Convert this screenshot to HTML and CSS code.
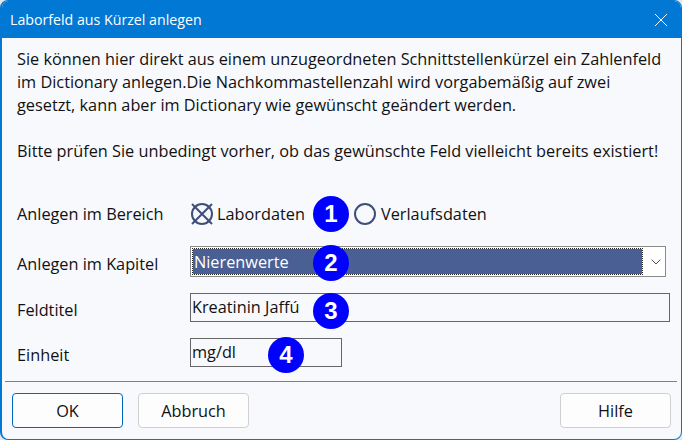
FILE: index.html
```html
<!DOCTYPE html>
<html lang="de">
<head>
    <meta charset="UTF-8">
    <title>Laborfeld aus Kürzel anlegen</title>
    <link rel="stylesheet" href="styles.css">
</head>
<body>

<div class="dialog">
    <div class="titlebar">
        <span class="title">Laborfeld aus Kürzel anlegen</span>
        <svg class="close" width="14" height="14" viewBox="0 0 14 14"><path d="M1 1L13 13M13 1L1 13" stroke="#fff" stroke-width="1" fill="none"/></svg>
    </div>

    <div class="content">
        <p class="intro">Sie können hier direkt aus einem unzugeordneten Schnittstellenkürzel ein Zahlenfeld<br>im Dictionary anlegen.Die Nachkommastellenzahl wird vorgabemäßig auf zwei<br>gesetzt, kann aber im Dictionary wie gewünscht geändert werden.</p>
        <p class="intro">Bitte prüfen Sie unbedingt vorher, ob das gewünschte Feld vielleicht bereits existiert!</p>

        <div class="form">
            <div class="row row-radio">
                <label class="label">Anlegen im Bereich</label>
                <div class="radios">
                    <svg class="radio" width="24" height="24" viewBox="0 0 24 24"><circle cx="12" cy="12" r="10" fill="none" stroke="#3f4f78" stroke-width="2"/><path d="M2 2L22 22M22 2L2 22" stroke="#3f4f78" stroke-width="2"/></svg>
                    <span class="radio-text first">Labordaten</span>
                    <svg class="radio" width="24" height="24" viewBox="0 0 24 24"><circle cx="12" cy="12" r="10" fill="none" stroke="#3f4f78" stroke-width="2"/></svg>
                    <span class="radio-text">Verlaufsdaten</span>
                </div>
                <span class="badge b1">1</span>
            </div>
            <div class="row row-select">
                <label class="label">Anlegen im Kapitel</label>
                <div class="select">
                    <span class="selected">Nierenwerte</span>
                    <svg class="chevron" width="10" height="6" viewBox="0 0 10 6"><path d="M0.5 0.5L5 5L9.5 0.5" stroke="#555" stroke-width="1" fill="none"/></svg>
                </div>
                <span class="badge b2">2</span>
            </div>
            <div class="row row-title">
                <label class="label">Feldtitel</label>
                <div class="input input-wide">Kreatinin Jaffú</div>
                <span class="badge b3">3</span>
            </div>
            <div class="row row-unit">
                <label class="label">Einheit</label>
                <div class="input input-small">mg/dl</div>
                <span class="badge b4">4</span>
            </div>
        </div>
    </div>

    <div class="footer">
        <button class="btn btn-default">OK</button>
        <button class="btn">Abbruch</button>
        <button class="btn btn-help">Hilfe</button>
    </div>
</div>

</body>
</html>
```

FILE: styles.css
```css
* {
    box-sizing: border-box;
}

html, body {
    margin: 0;
    height: 100%;
    background: #e4e6ea;
}

body {
    font-family: "Open Sans", "Noto Sans", sans-serif;
    font-size: 16.3px;
    color: #111;
    overflow: hidden;
}

.dialog {
    width: 682px;
    height: 440px;
    background: #f7f9fd;
    border: 1px solid #0078d4;
    border-left-width: 2px;
    border-radius: 8px;
    overflow: hidden;
    display: flex;
    flex-direction: column;
}

.titlebar {
    height: 37px;
    flex: none;
    background: #0078d4;
    color: #fff;
    font-size: 14.2px;
    padding: 0 13px 0 8px;
    display: flex;
    align-items: center;
    justify-content: space-between;
}

.content {
    flex: 1;
    padding: 10px 10px 0 15px;
}

.intro {
    margin: 0 0 23px;
    line-height: 23px;
    white-space: nowrap;
}

.row {
    position: relative;
    display: flex;
    align-items: center;
}

.row-radio {
    height: 30px;
    margin-top: 36px;
}

.row-select {
    height: 31px;
    margin-top: 17px;
}

.row-title {
    height: 29px;
    margin-top: 16px;
}

.row-unit {
    height: 29px;
    margin-top: 16px;
}

.label {
    width: 173px;
    flex: none;
}

.row-select .label,
.row-title .label,
.row-unit .label {
    padding-top: 4px;
}

.radios {
    display: flex;
    align-items: center;
}

.radio {
    flex: none;
}

.radio-text {
    margin-left: 4px;
}

.radio-text.first {
    margin-left: 3px;
    width: 136px;
    flex: none;
}

.select {
    width: 476px;
    height: 31px;
    border: 1px solid #8a8a8a;
    background: #fff;
    padding: 2px;
    display: flex;
    align-items: center;
}

.selected {
    width: 449px;
    height: 25px;
    background: #4a5f94;
    color: #fff;
    outline: 1px dotted #222;
    padding-left: 1px;
    line-height: 26px;
}

.chevron {
    margin-left: 9px;
}

.input {
    height: 29px;
    border: 1px solid #666;
    padding-left: 1px;
    line-height: 26px;
}

.input-wide {
    width: 480px;
}

.input-small {
    width: 152px;
}

.badge {
    position: absolute;
    width: 36px;
    height: 36px;
    border-radius: 50%;
    background: #0000ff;
    color: #fff;
    font-family: "Liberation Sans", Arial, sans-serif;
    font-weight: bold;
    font-size: 24px;
    line-height: 36px;
    text-align: center;
}

.b1 { left: 296px; top: -3px; }
.b2 { left: 296px; top: -1px; }
.b3 { left: 296px; top: 0; }
.b4 { left: 251px; top: -1px; }

.footer {
    flex: none;
    margin: 0 4px 0 3px;
    border-top: 1px solid #808080;
    height: 58px;
    padding: 11px 6px 0 7px;
    display: flex;
    gap: 15px;
}

.btn {
    width: 111px;
    height: 35px;
    font: inherit;
    color: #111;
    background: #fdfdfe;
    border: 1px solid #d0d0d0;
    border-radius: 4px;
}

.btn-default {
    border-color: #0067c0;
}

.btn-help {
    margin-left: auto;
}
```
